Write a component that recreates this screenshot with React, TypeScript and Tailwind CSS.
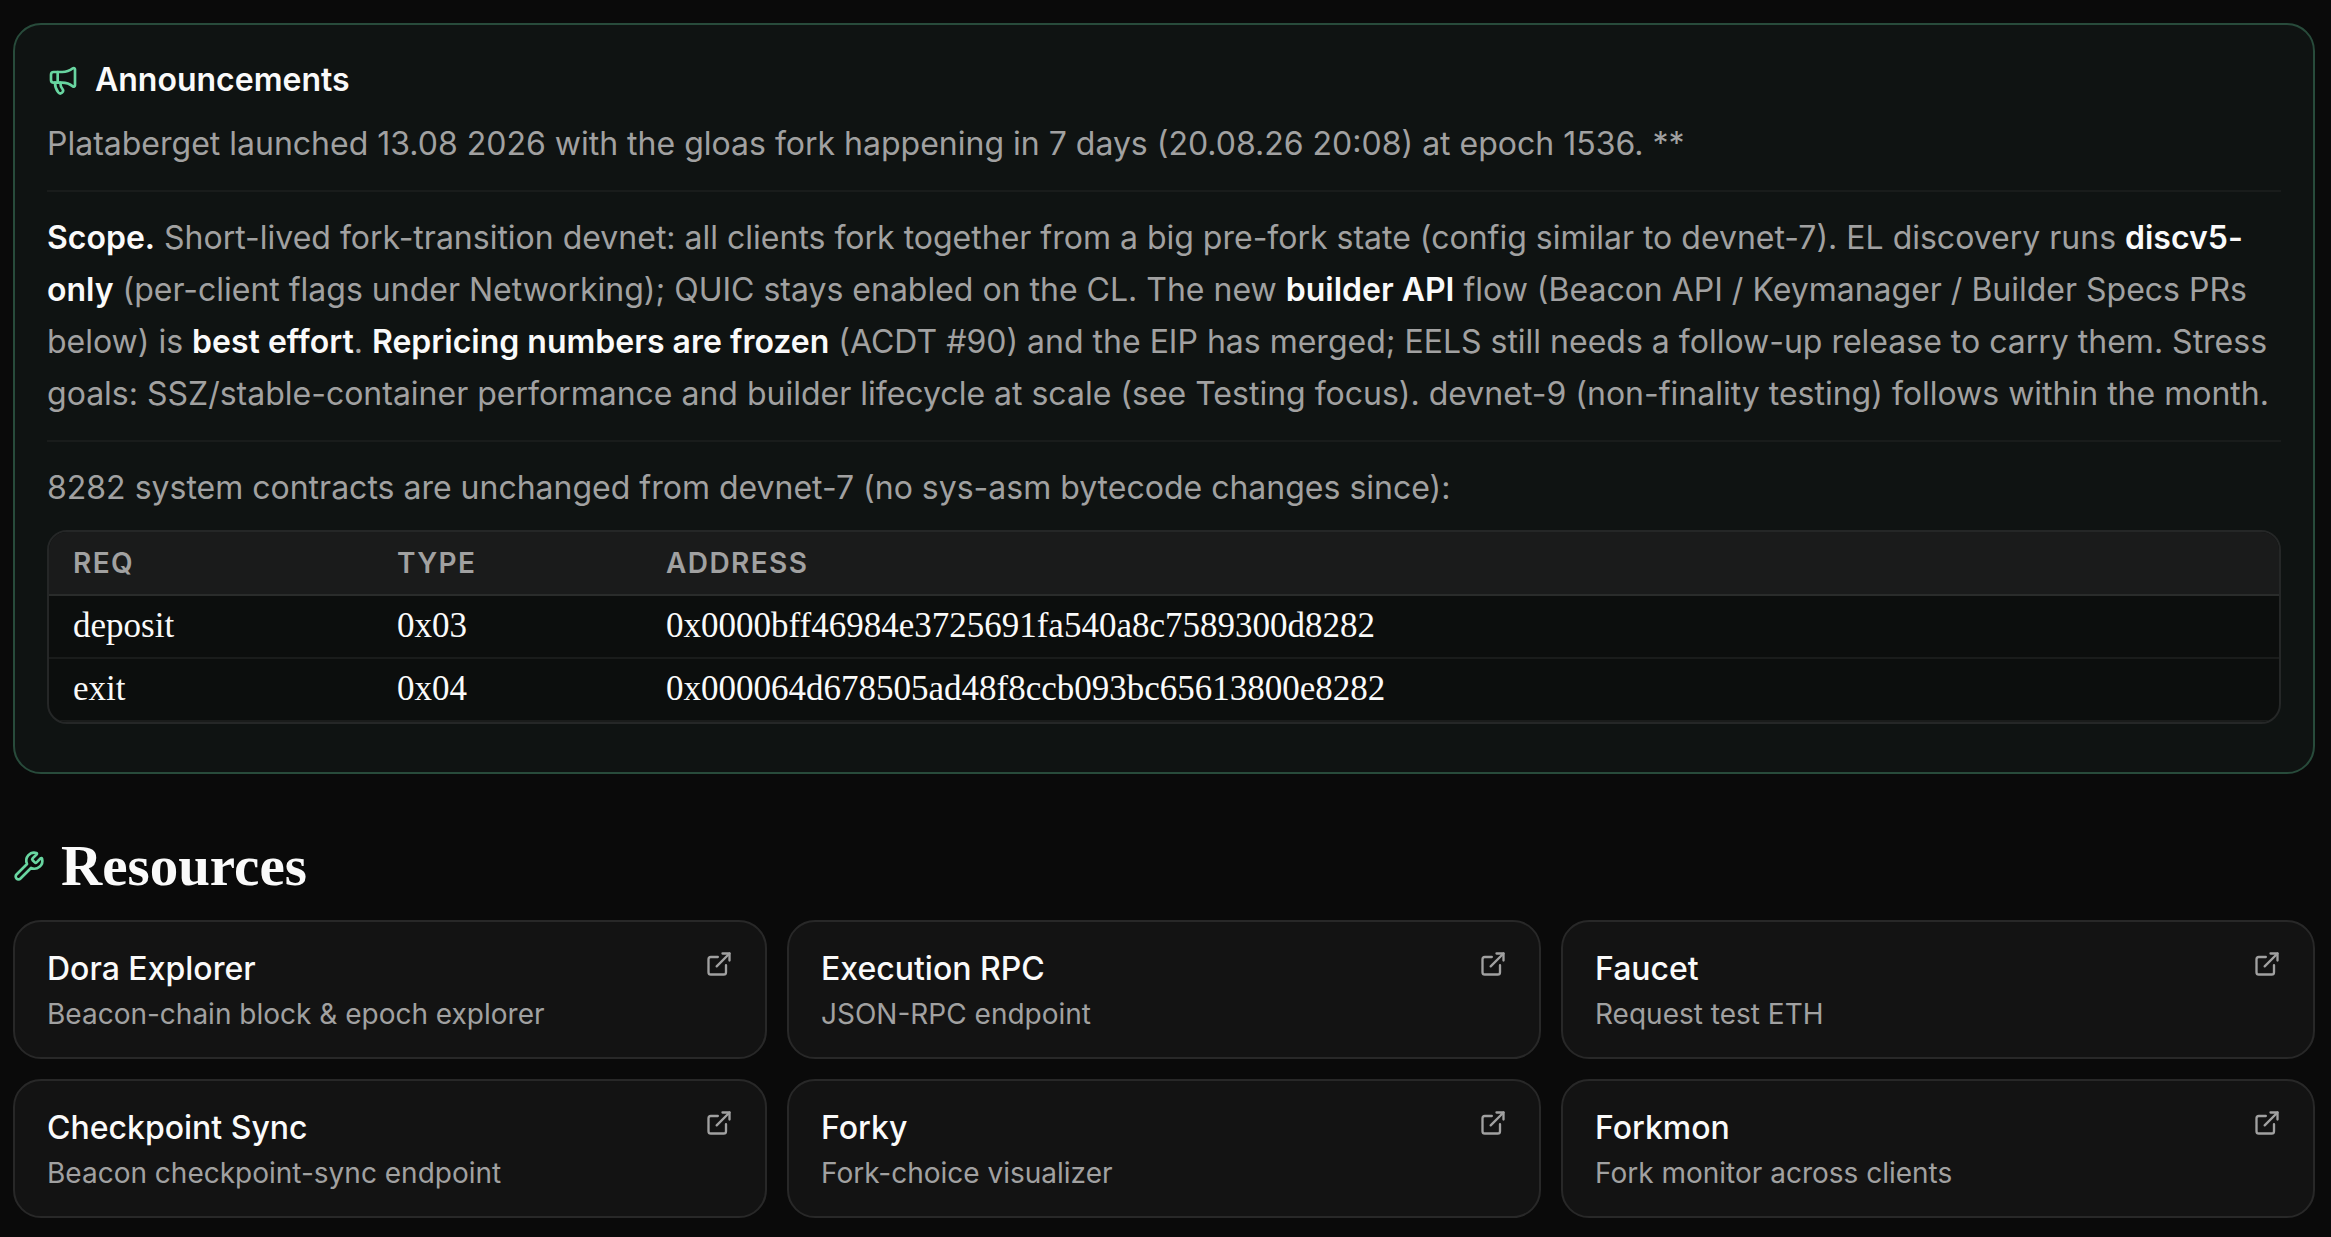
import { ExternalLink, Megaphone, Wrench } from 'lucide-react';

interface Contract {
    req: string,
    type: string,
    address: string,
}

interface Resource {
    title: string,
    description: string,
}

const contracts: Contract[] = [
    { req: 'deposit', type: '0x03', address: '0x0000bff46984e3725691fa540a8c7589300d8282' },
    { req: 'exit', type: '0x04', address: '0x000064d678505ad48f8ccb093bc65613800e8282' },
];

const resources: Resource[] = [
    { title: 'Dora Explorer', description: 'Beacon-chain block & epoch explorer' },
    { title: 'Execution RPC', description: 'JSON-RPC endpoint' },
    { title: 'Faucet', description: 'Request test ETH' },
    { title: 'Checkpoint Sync', description: 'Beacon checkpoint-sync endpoint' },
    { title: 'Forky', description: 'Fork-choice visualizer' },
    { title: 'Forkmon', description: 'Fork monitor across clients' },
];

const Strong = ({ children }: { children: string }) => (
    <strong className="font-semibold text-[#fafafa]">{children}</strong>
);

const Divider = () => <hr className="my-5 border-t-2 border-[#191c1b]" />;

const ContractsTable = () => {
    return (
        <div className="my-4 overflow-hidden rounded-[20px] border-2 border-[#252727] bg-[#0c0e0d]">
            <table className="w-full border-separate border-spacing-0 text-left">
                <thead className="bg-[#1a1b1b] text-[28px] leading-[42px] tracking-wider text-[#a1a1a1] uppercase">
                    <tr>
                        <th className="w-[324px] border-b-2 border-[#2a2c2b] py-[10px] pl-6 font-semibold">Req</th>
                        <th className="w-[269px] border-b-2 border-[#2a2c2b] py-[10px] pl-6 font-semibold">Type</th>
                        <th className="border-b-2 border-[#2a2c2b] py-[10px] pl-6 font-semibold">Address</th>
                    </tr>
                </thead>
                <tbody className="font-['Liberation_Serif',serif] text-[35px] leading-[41px] text-[#fafafa]">
                    {contracts.map((contract) => (
                        <tr key={contract.req}>
                            <td className="border-b-2 border-[#1a1c1b] pt-[9px] pb-[11px] pl-6">{contract.req}</td>
                            <td className="border-b-2 border-[#1a1c1b] pt-[9px] pb-[11px] pl-6">{contract.type}</td>
                            <td className="border-b-2 border-[#1a1c1b] pt-[9px] pb-[11px] pl-6">{contract.address}</td>
                        </tr>
                    ))}
                </tbody>
            </table>
        </div>
    )
}

const Announcements = () => {
    return (
        <section className="rounded-[28px] border-2 border-[#284b3b] bg-[#0f1312] p-8">
            <h3 className="mb-4 flex items-center gap-4 text-[32px] leading-[45px] font-semibold text-[#fafafa]">
                <Megaphone className="size-8 text-[#68d5a0]" />
                Announcements
            </h3>
            <div className="text-[32px] leading-[52px] text-[#a1a1a1]">
                <p>Plataberget launched 13.08 2026 with the gloas fork happening in 7 days (20.08.26 20:08) at epoch 1536. **</p>
                <Divider />
                <p>
                    <Strong>Scope.</Strong> Short-lived fork-transition devnet: all clients fork together from a big pre-fork
                    state (config similar to devnet-7). EL discovery runs <Strong>discv5-only</Strong> (per-client flags under
                    Networking); QUIC stays enabled on the CL. The new <Strong>builder API</Strong> flow (Beacon API /
                    Keymanager / Builder Specs PRs below) is <Strong>best effort</Strong>. <Strong>Repricing numbers are frozen</Strong> (ACDT
                    #90) and the EIP has merged; EELS still needs a follow-up release to carry them. Stress goals:
                    SSZ/stable-container performance and builder lifecycle at scale (see Testing focus). devnet-9
                    (non-finality testing) follows within the month.
                </p>
                <Divider />
                <p>8282 system contracts are unchanged from devnet-7 (no sys-asm bytecode changes since):</p>
            </div>
            <ContractsTable />
        </section>
    )
}

const ResourceCard = ({ title, description }: Resource) => {
    return (
        <a href="#" className="flex items-start justify-between rounded-[28px] border-2 border-[#282828] bg-[#131313] px-8 pt-[25px] pb-[23px]">
            <div>
                <div className="mb-1 text-[32px] leading-[44px] font-medium text-[#fafafa]">{title}</div>
                <div className="text-[28px] leading-[39px] text-[#a1a1a1]">{description}</div>
            </div>
            <ExternalLink className="mt-[3px] size-7 shrink-0 text-[#a1a1a1]" />
        </a>
    )
}

const App = () => {
    return (
        <main className="min-h-screen bg-[#0a0a0a] pt-[23px] pr-4 pb-[18px] pl-[13px] font-['Inter',sans-serif] [font-variation-settings:'opsz'_14]">
            <Announcements />
            <h2 className="mt-[60px] mb-[22px] flex items-center gap-4 font-['Liberation_Serif',serif] text-[57px] leading-[64px] font-bold text-[#fafafa]">
                <Wrench className="size-8 text-[#68d5a0]" />
                Resources
            </h2>
            <div className="grid grid-cols-3 gap-5">
                {resources.map((resource) => (
                    <ResourceCard key={resource.title} {...resource} />
                ))}
            </div>
        </main>
    )
}
export default App;
